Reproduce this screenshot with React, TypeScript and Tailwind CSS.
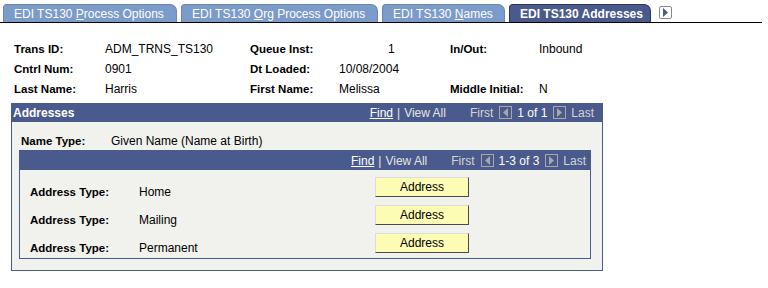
import React from "react";

const navy = "bg-[#4a5a8c]";

function Arrow({ dir }: { dir: "l" | "r" }) {
  return (
    <span className="inline-flex w-[13px] h-[13px] border border-[#a8a8a8] items-center justify-center">
      <svg width="7" height="9" viewBox="0 0 7 9">
        {dir === "l" ? (
          <polygon points="6,0 6,9 1,4.5" fill="#a8a8a8" />
        ) : (
          <polygon points="1,0 1,9 6,4.5" fill="#a8a8a8" />
        )}
      </svg>
    </span>
  );
}

function Nav({ count }: { count: string }) {
  return (
    <div className="flex items-center text-[12px] leading-[14px] text-white">
      <span className="underline">Find</span>
      <span className="mx-[4px] text-[#e8e8e8]">|</span>
      <span className="text-[#e4e4e4]">View All</span>
      <span className="ml-[24px] text-[#d4d4d4]">First</span>
      <span className="ml-[6px] mr-[5px]">
        <Arrow dir="l" />
      </span>
      <span>{count}</span>
      <span className="ml-[6px] mr-[5px]">
        <Arrow dir="r" />
      </span>
      <span className="text-[#d4d4d4]">Last</span>
    </div>
  );
}

function Tab({ w, children, active }: { w: string; children: React.ReactNode; active?: boolean }) {
  return (
    <div
      className={
        w +
        " h-[18px] flex items-center pl-[10px] text-[12px] text-white whitespace-nowrap rounded-tl-[4px] rounded-tr-[7px] border border-b-0 " +
        (active
          ? "bg-[#4a5a8c] border-[#2a3560] font-bold"
          : "bg-[#7b9bcb] border-[#6f86aa]")
      }
    >
      {children}
    </div>
  );
}

const label = "font-bold text-[11.5px]";

export default function App() {
  return (
    <div className="w-[768px] h-[288px] bg-white text-black font-['Liberation_Sans',Arial,sans-serif] overflow-hidden">
      <div className="flex items-end gap-[4px] pl-[3px] pt-[4px] border-b border-black w-[762px]">
        <Tab w="w-[174px]">
          EDI TS130&nbsp;<span className="underline">P</span>rocess Options
        </Tab>
        <Tab w="w-[197px]">
          EDI TS130&nbsp;<span className="underline">O</span>rg Process Options
        </Tab>
        <Tab w="w-[123px]">
          EDI TS130&nbsp;<span className="underline">N</span>ames
        </Tab>
        <Tab w="w-[142px]" active>
          EDI TS130 Addresses
        </Tab>
        <div className="ml-[4px] mb-[3px] w-[13px] h-[13px] border border-[#8a8a8a] rounded-[2px] flex items-center justify-center bg-white">
          <svg width="7" height="9" viewBox="0 0 7 9">
            <polygon points="1,0 1,9 6,4.5" fill="#4a5a8c" />
          </svg>
        </div>
      </div>

      <div className="pt-[16px] pl-[14px] grid grid-cols-[91px_145px_89px_111px_89px_auto] text-[12px] leading-[20px]">
        <span className={label}>Trans ID:</span>
        <span>ADM_TRNS_TS130</span>
        <span className={label}>Queue Inst:</span>
        <span className="pl-[49px]">1</span>
        <span className={label}>In/Out:</span>
        <span>Inbound</span>

        <span className={label}>Cntrl Num:</span>
        <span>0901</span>
        <span className={label}>Dt Loaded:</span>
        <span>10/08/2004</span>
        <span></span>
        <span></span>

        <span className={label}>Last Name:</span>
        <span>Harris</span>
        <span className={label}>First Name:</span>
        <span>Melissa</span>
        <span className={label}>Middle Initial:</span>
        <span>N</span>
      </div>

      <div className="mt-[4px] ml-[11px] w-[592px] border border-[#4a5a8c] bg-[#f1f2ee]">
        <div className={navy + " h-[18px] flex items-center justify-between pl-[1px] pr-[8px]"}>
          <span className="text-white font-bold text-[12px]">Addresses</span>
          <Nav count="1 of 1" />
        </div>

        <div className="flex h-[28px] pt-[12px] pl-[9px] text-[12px] leading-[14px]">
          <span className={label + " w-[90px]"}>Name Type:</span>
          <span>Given Name (Name at Birth)</span>
        </div>

        <div className="ml-[7px] mr-[11px] mb-[11px] border border-[#4a5a8c] pb-[4px]">
          <div className={navy + " h-[19px] flex items-center justify-end pr-[4px]"}>
            <Nav count="1-3 of 3" />
          </div>
          {["Home", "Mailing", "Permanent"].map((t) => (
            <div key={t} className="flex h-[28px] pl-[10px] text-[12px]">
              <span className={label + " w-[109px] mt-[15px] leading-[14px]"}>Address Type:</span>
              <span className="w-[236px] mt-[15px] leading-[14px]">{t}</span>
              <button className="mt-[7px] w-[94px] h-[20px] bg-[#fcfcb4] border-t border-l border-t-[#dcdcdc] border-l-[#dcdcdc] border-r border-b border-r-[#4a4a4a] border-b-[#4a4a4a] text-[12px] leading-[16px] text-black">
                Address
              </button>
            </div>
          ))}
        </div>
      </div>
    </div>
  );
}
